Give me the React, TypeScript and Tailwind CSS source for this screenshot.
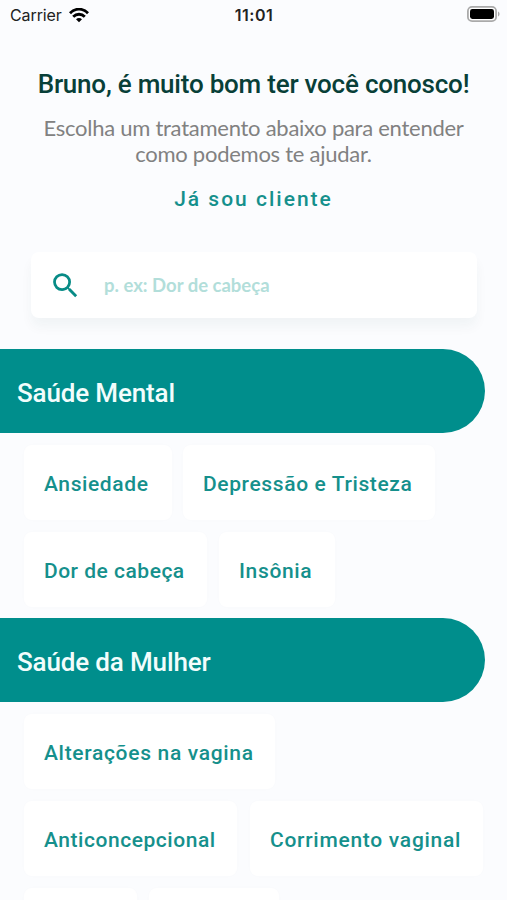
import React from "react";

const heading = "font-['Roboto',sans-serif]";

function Banner({ children }: { children: React.ReactNode }) {
  return (
    <h2 className={`${heading} flex h-[84px] w-[485px] items-center rounded-r-full bg-[#008e8c] pt-[4px] pl-[17px] text-[26px] font-medium tracking-[-0.15px] text-[#f2fdfc]`}>
      <span>{children}</span>
    </h2>
  );
}

function Tag({ children, box }: { children?: React.ReactNode; box: string }) {
  return (
    <button className={`${heading} ${box} flex h-[75px] shrink-0 items-center rounded-lg bg-white pt-[4px] pl-5 text-left text-[21px] font-medium whitespace-nowrap text-[#15908c] shadow-[0_0_8px_rgba(0,60,80,0.012)]`}>
      <span>{children}</span>
    </button>
  );
}

export default function App() {
  return (
    <div className="flex h-[900px] w-[507px] flex-col overflow-hidden bg-[#fbfcfe]">
      <header className="grid h-[30px] shrink-0 grid-cols-3 items-center pr-[7px] pl-[10px] font-['Inter',sans-serif] text-[#222]">
        <div className="flex items-center gap-[7px] text-[16px] tracking-[-0.1px]">
          <span>Carrier</span>
          <svg width="20" height="15" viewBox="0 0 20 15" fill="none" stroke="#000" strokeWidth="2.8">
            <path d="M1 5.2C6-.2 14-.2 19 5.2" />
            <path d="M4.2 8.8c3.3-3.4 8.3-3.4 11.6 0" />
            <path d="M7 11.2c1.7-1.6 4.3-1.6 6 0L10 14.3z" fill="#000" stroke="none" />
          </svg>
        </div>
        <span className="pr-[2px] text-center text-[16px] font-semibold tracking-[0.5px]">11:01</span>
        <svg className="-mt-[2px] justify-self-end" width="33" height="16" viewBox="0 0 33 16">
          <rect x=".9" y=".9" width="28.2" height="14.2" rx="4.2" fill="#fff" stroke="#aaa" strokeWidth="1.8" />
          <rect x="3" y="3" width="24" height="10" rx="2.4" fill="#000" />
          <path d="M31 5.5c2 .8 2 4.2 0 5z" fill="#aaa" />
        </svg>
      </header>

      <section className="flex shrink-0 flex-col items-center pt-[38px] text-center">
        <h1 className={`${heading} text-[26px] leading-8 font-medium tracking-[-0.22px] whitespace-nowrap text-[#083f38]`}>
          Bruno, é muito bom ter você conosco!
        </h1>
        <p className="mt-[15px] font-['Lato',sans-serif] text-[22px] leading-[26px] tracking-[-0.26px] whitespace-nowrap text-[#818181]">
          Escolha um tratamento abaixo para entender
          <br />
          como podemos te ajudar.
        </p>
        <a className={`${heading} mt-[18px] text-[21px] leading-[28px] font-medium tracking-[2px] text-[#15908c]`}>Já sou cliente</a>
      </section>

      <div className="mt-[39px] ml-[31px] flex h-[66px] w-[446px] shrink-0 items-center rounded-lg bg-white pl-[18px] shadow-[0_9px_12px_rgba(0,80,70,0.045)]">
        <svg width="33" height="33" viewBox="0 0 24 24" fill="#078b86">
          <path d="M15.5 14h-.79l-.28-.27A6.47 6.47 0 0 0 16 9.5 6.5 6.5 0 1 0 9.500 16c1.610 0 3.090-.59 4.230-1.570l.27.28v.79l5 4.990L20.490 19zm-6 0a4.500 4.500 0 1 1 0-9 4.500 4.500 0 0 1 0 9" />
        </svg>
        <span className="ml-[22px] pt-[2px] font-['Lato',sans-serif] text-[18.5px] font-bold text-[#b2deda]">p. ex: Dor de cabeça</span>
      </div>

      <main className="mt-[31px] shrink-0">
        <Banner>Saúde Mental</Banner>
        <div className="flex flex-col gap-3 pt-3 pb-[11px] pl-6">
          <div className="flex gap-[11px]">
            <Tag box="w-[148px] tracking-[0.6px]">Ansiedade</Tag>
            <Tag box="w-[252px] tracking-[0.62px]">Depressão e Tristeza</Tag>
          </div>
          <div className="flex gap-3">
            <Tag box="w-[183px] tracking-[0.5px]">Dor de cabeça</Tag>
            <Tag box="w-[116px] tracking-[0.65px]">Insônia</Tag>
          </div>
        </div>
        <Banner>Saúde da Mulher</Banner>
        <div className="flex flex-col gap-3 pt-3 pl-6">
          <Tag box="w-[251px] tracking-[0.68px]">Alterações na vagina</Tag>
          <div className="flex gap-[13px]">
            <Tag box="w-[213px] tracking-[0.55px]">Anticoncepcional</Tag>
            <Tag box="w-[233px] tracking-[0.72px]">Corrimento vaginal</Tag>
          </div>
          <div className="flex gap-3">
            <Tag box="w-[113px]" />
            <Tag box="w-[130px]" />
          </div>
        </div>
      </main>
    </div>
  );
}
